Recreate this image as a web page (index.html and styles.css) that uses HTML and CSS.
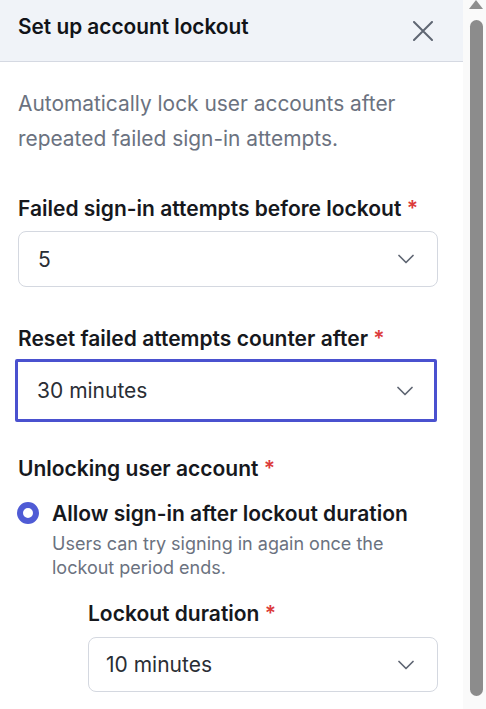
FILE: index.html
```html
<!DOCTYPE html>
<html lang="en">
<head>
<meta charset="utf-8">
<title>Set up account lockout</title>
<link rel="stylesheet" href="styles.css">
</head>
<body>
<div class="frame">
  <section class="panel">
    <header class="panel-header">
      <h1 class="panel-title">Set up account lockout</h1>
      <button class="close-btn" aria-label="Close">
        <svg width="20" height="20" viewBox="0 0 20 20"><path d="M1 1 L19 19 M19 1 L1 19" stroke="#5f6673" stroke-width="2" fill="none" stroke-linecap="round"/></svg>
      </button>
    </header>
    <div class="panel-body">
      <p class="description">Automatically lock user accounts after repeated failed sign-in attempts.</p>

      <div class="field field-first">
        <label class="label">Failed sign-in attempts before lockout <span class="req">*</span></label>
        <div class="select">
          <span class="select-value">5</span>
          <svg class="chevron" width="16" height="10" viewBox="0 0 16 10"><path d="M1 1.5 L8 8.5 L15 1.5" stroke="#5f6673" stroke-width="1.7" fill="none" stroke-linecap="round" stroke-linejoin="round"/></svg>
        </div>
      </div>

      <div class="field field-second">
        <label class="label">Reset failed attempts counter after <span class="req">*</span></label>
        <div class="select select-focused">
          <span class="select-value">30 minutes</span>
          <svg class="chevron" width="16" height="10" viewBox="0 0 16 10"><path d="M1 1.5 L8 8.5 L15 1.5" stroke="#5f6673" stroke-width="1.7" fill="none" stroke-linecap="round" stroke-linejoin="round"/></svg>
        </div>
      </div>

      <div class="field field-third">
        <span class="label">Unlocking user account <span class="req">*</span></span>
        <div class="radio-option">
          <span class="radio"></span>
          <div class="radio-text">
            <span class="radio-label">Allow sign-in after lockout duration</span>
            <span class="radio-help">Users can try signing in again once the lockout period ends.</span>
          </div>
        </div>
        <div class="sub-field">
          <label class="label">Lockout duration <span class="req">*</span></label>
          <div class="select select-sub">
            <span class="select-value">10 minutes</span>
            <svg class="chevron" width="16" height="10" viewBox="0 0 16 10"><path d="M1 1.5 L8 8.5 L15 1.5" stroke="#5f6673" stroke-width="1.7" fill="none" stroke-linecap="round" stroke-linejoin="round"/></svg>
          </div>
        </div>
      </div>
    </div>
  </section>
  <div class="scrollbar">
    <span class="scroll-arrow"></span>
    <span class="scroll-thumb"></span>
  </div>
</div>
</body>
</html>
```
FILE: styles.css
```css
* { box-sizing: border-box; }
html, body {
  margin: 0;
  padding: 0;
  height: 709px;
  overflow: hidden;
  background: #ffffff;
  font-family: Inter, "Noto Sans", sans-serif;
}
.frame {
  display: flex;
  height: 709px;
}
.panel {
  width: 463px;
  flex: none;
  background: #fff;
}
.panel-header {
  height: 62px;
  background: #f0f3f8;
  border-bottom: 1px solid #d5d9e2;
  display: flex;
  align-items: flex-start;
  justify-content: space-between;
  padding: 15px 30px 0 18px;
}
.panel-title {
  margin: 0;
  font-size: 20.8px;
  line-height: 24px;
  font-weight: 600;
  color: #111318;
}
.close-btn {
  border: 0;
  background: transparent;
  padding: 0;
  margin-top: 6px;
  width: 20px;
  height: 20px;
  display: flex;
}
.panel-body {
  padding: 24px 25px 0 18px;
}
.description {
  margin: 0;
  font-size: 20.9px;
  line-height: 35px;
  color: #6b7280;
}
.field { display: flex; flex-direction: column; }
.field-first { margin-top: 40px; }
.field-second { margin-top: 39px; }
.field-third { margin-top: 34px; }
.label {
  font-size: 21px;
  line-height: 26px;
  font-weight: 600;
  color: #16181d;
}
.req { color: #dc3b3b; }
.select {
  margin-top: 9px;
  height: 56px;
  border: 1px solid #d4d8e0;
  border-radius: 8px;
  display: flex;
  align-items: center;
  justify-content: space-between;
  padding: 0 23px 0 19px;
  background: #fff;
}
.select-value {
  font-size: 21px;
  color: #2a2e35;
}
.select-focused {
  margin-top: 7px;
  margin-left: -3px;
  margin-right: 1px;
  height: 63px;
  border: 3px solid #4a51cf;
  border-radius: 2px;
  padding-left: 19px;
  padding-right: 21px;
}
.radio-option {
  margin-top: 19px;
  display: flex;
  gap: 13px;
  align-items: flex-start;
}
.radio {
  width: 22px;
  height: 22px;
  border-radius: 50%;
  border: 6.5px solid #4f5bd5;
  background: #fff;
  flex: none;
  margin-top: 1px;
  margin-left: -1px;
}
.radio-text { display: flex; flex-direction: column; }
.radio-label {
  font-size: 21px;
  line-height: 26px;
  font-weight: 600;
  color: #16181d;
}
.radio-help {
  margin-top: 5px;
  font-size: 18px;
  line-height: 24px;
  color: #6b7280;
}
.sub-field {
  margin-top: 21px;
  margin-left: 70px;
  display: flex;
  flex-direction: column;
}
.select-sub { margin-top: 10px; height: 55px; padding-left: 17px; }
.scrollbar {
  width: 23px;
  flex: none;
  background: #fafafa;
  display: flex;
  flex-direction: column;
  align-items: center;
  padding-left: 4px;
  padding-right: 1px;
}
.scroll-arrow {
  width: 0;
  height: 0;
  border-left: 7px solid transparent;
  border-right: 7px solid transparent;
  border-bottom: 9px solid #8f8f8f;
  margin-top: 0;
}
.scroll-thumb {
  margin-top: 11px;
  width: 13px;
  height: 676px;
  border-radius: 7px;
  background: #8c8c8c;
}
```
